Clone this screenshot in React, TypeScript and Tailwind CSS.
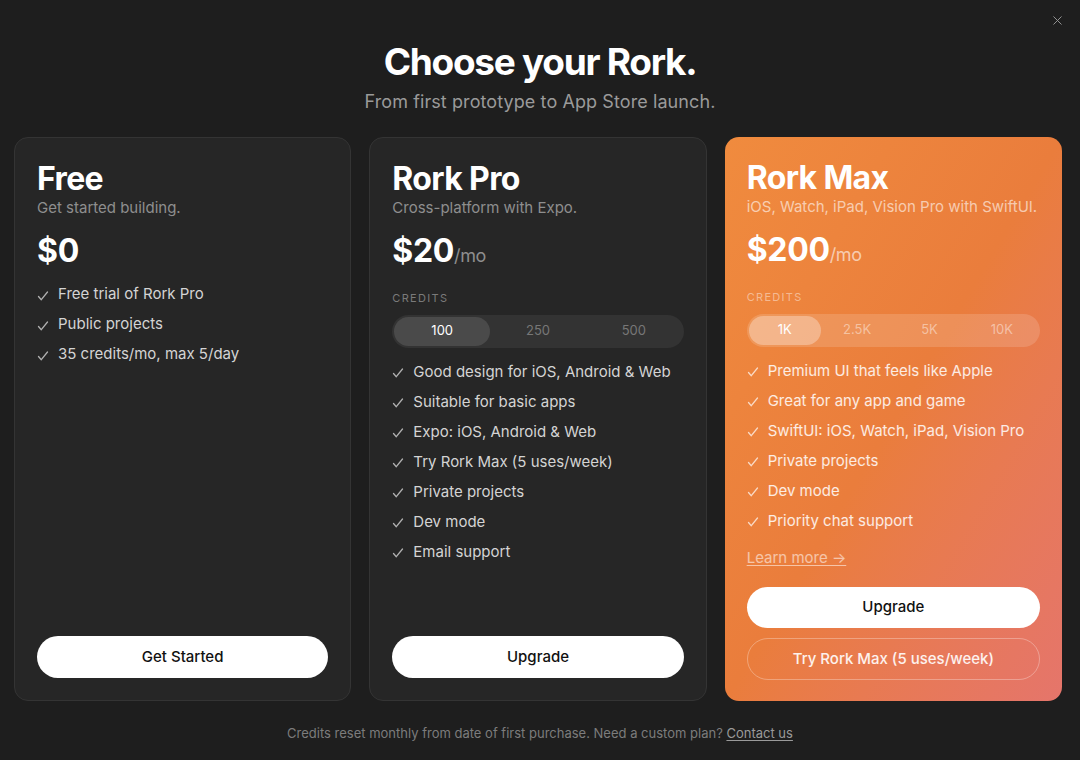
import { X } from 'lucide-react';

function Check({ className = '' }: { className?: string }) {
    return (
        <svg className={`w-3 h-3 flex-shrink-0 ${className}`} viewBox="0 0 12 12" fill="none" stroke="currentColor" strokeWidth={1.3} strokeLinecap="round" strokeLinejoin="round">
            <path d="M1.5 6.5l2.8 3.2L10.5 2" />
        </svg>
    );
}

function Features({ items, light = false }: { items: string[]; light?: boolean }) {
    return (
        <ul className="flex flex-col gap-[9px]">
            {items.map(f => (
                <li key={f} className={`flex items-center gap-[9px] text-[15px] leading-[21px] ${light ? 'text-white/85' : 'text-[#d4d4d4]'}`}>
                    <Check className={light ? 'text-white/70 mt-1' : 'text-[#b0b0b0] mt-1'} />
                    {f}
                </li>
            ))}
        </ul>
    );
}

function Segments({ options, light = false }: { options: string[]; light?: boolean }) {
    return (
        <div>
            <p className={`text-[11px] tracking-[0.12em] uppercase mb-[8px] ${light ? 'text-white/45' : 'text-[#7a7a7a]'}`}>Credits</p>
            <div className={`flex rounded-full p-[2px] h-[33px] ${light ? 'bg-white/15' : 'bg-[#333333]'}`}>
                {options.map((o, i) => (
                    <div key={o} className={`flex-1 flex items-center justify-center rounded-full text-[13px] ${i === 0 ? (light ? 'bg-white/30 text-white' : 'bg-[#4a4a4a] text-white') : (light ? 'text-white/45' : 'text-[#777777]')}`}>
                        {o}
                    </div>
                ))}
            </div>
        </div>
    );
}

export default function App() {
    return (
        <div className="relative w-[1080px] h-[760px] bg-[#1e1e1e] overflow-hidden" style={{ fontFamily: 'Inter, "Noto Sans", sans-serif' }}>
            <button className="absolute right-[15px] top-[13px] text-[#9a9a9a]">
                <X className="w-[15px] h-[15px]" strokeWidth={1.5} />
            </button>

            {/* Header */}
            <div className="pt-[40px] text-center">
                <h1 className="text-[37px] leading-[44px] font-bold tracking-[-0.035em] text-white">Choose your Rork.</h1>
                <p className="mt-[6px] text-[18px] leading-[24px] tracking-[0.005em] text-[#9a9a9a]">From first prototype to App Store launch.</p>
            </div>

            {/* Cards */}
            <div className="mt-[23px] ml-[14px] w-[1048px] grid grid-cols-3 gap-[18px]">
                {/* Free */}
                <div className="h-[564px] rounded-[14px] bg-[#262626] border border-[#343434] px-[22px] pt-[23px] pb-[22px] flex flex-col">
                    <h2 className="text-[32px] leading-[36px] font-bold tracking-[-0.02em] text-white">Free</h2>
                    <p className="mt-[1px] text-[15px] leading-[20px] text-[#8e8e8e]">Get started building.</p>
                    <div className="mt-[14px] text-[32px] leading-[38px] font-bold text-white tracking-[-0.01em]">$0</div>
                    <div className="mt-[13px]">
                        <Features items={['Free trial of Rork Pro', 'Public projects', '35 credits/mo, max 5/day']} />
                    </div>
                    <button className="mt-auto h-[42px] rounded-full bg-white text-[15px] font-medium text-[#111111]">Get Started</button>
                </div>

                {/* Pro */}
                <div className="h-[564px] rounded-[14px] bg-[#262626] border border-[#343434] px-[22px] pt-[23px] pb-[22px] flex flex-col">
                    <h2 className="text-[32px] leading-[36px] font-bold tracking-[-0.02em] text-white">Rork Pro</h2>
                    <p className="mt-[1px] text-[15px] leading-[20px] text-[#8e8e8e]">Cross-platform with Expo.</p>
                    <div className="mt-[14px] flex items-baseline">
                        <span className="text-[32px] leading-[38px] font-bold text-white tracking-[-0.01em]">$20</span>
                        <span className="text-[18px] text-[#8e8e8e] tracking-[-0.02em]">/mo</span>
                    </div>
                    <div className="mt-[20px]">
                        <Segments options={['100', '250', '500']} />
                    </div>
                    <div className="mt-[13px]">
                        <Features items={['Good design for iOS, Android & Web', 'Suitable for basic apps', 'Expo: iOS, Android & Web', 'Try Rork Max (5 uses/week)', 'Private projects', 'Dev mode', 'Email support']} />
                    </div>
                    <button className="mt-auto h-[42px] rounded-full bg-white text-[15px] font-medium text-[#111111]">Upgrade</button>
                </div>

                {/* Max */}
                <div className="h-[564px] rounded-[14px] bg-gradient-to-br from-[#f08b3e] via-[#ea7d3c] to-[#e5756b] px-[22px] pt-[23px] pb-[21px] flex flex-col">
                    <h2 className="text-[32px] leading-[36px] font-bold tracking-[-0.02em] text-white">Rork Max</h2>
                    <p className="mt-[1px] text-[15px] leading-[20px] text-white/60">iOS, Watch, iPad, Vision Pro with SwiftUI.</p>
                    <div className="mt-[14px] flex items-baseline">
                        <span className="text-[32px] leading-[38px] font-bold text-white tracking-[-0.01em]">$200</span>
                        <span className="text-[18px] text-white/60 tracking-[-0.02em]">/mo</span>
                    </div>
                    <div className="mt-[20px]">
                        <Segments options={['1K', '2.5K', '5K', '10K']} light />
                    </div>
                    <div className="mt-[13px]">
                        <Features light items={['Premium UI that feels like Apple', 'Great for any app and game', 'SwiftUI: iOS, Watch, iPad, Vision Pro', 'Private projects', 'Dev mode', 'Priority chat support']} />
                    </div>
                    <a className="mt-[16px] text-[15px] text-white/55 underline underline-offset-2">Learn more →</a>
                    <button className="mt-[18px] h-[42px] rounded-full bg-white text-[15px] font-medium text-[#111111]">Upgrade</button>
                    <button className="mt-[10px] h-[42px] rounded-full border border-white/30 text-[15px] font-medium text-white/90">Try Rork Max (5 uses/week)</button>
                </div>
            </div>

            {/* Footer */}
            <p className="mt-[23px] text-center text-[13px] text-[#7c7c7c]">
                Credits reset monthly from date of first purchase. Need a custom plan? <a className="underline underline-offset-2 text-[#9a9a9a]">Contact us</a>
            </p>
        </div>
    );
}
